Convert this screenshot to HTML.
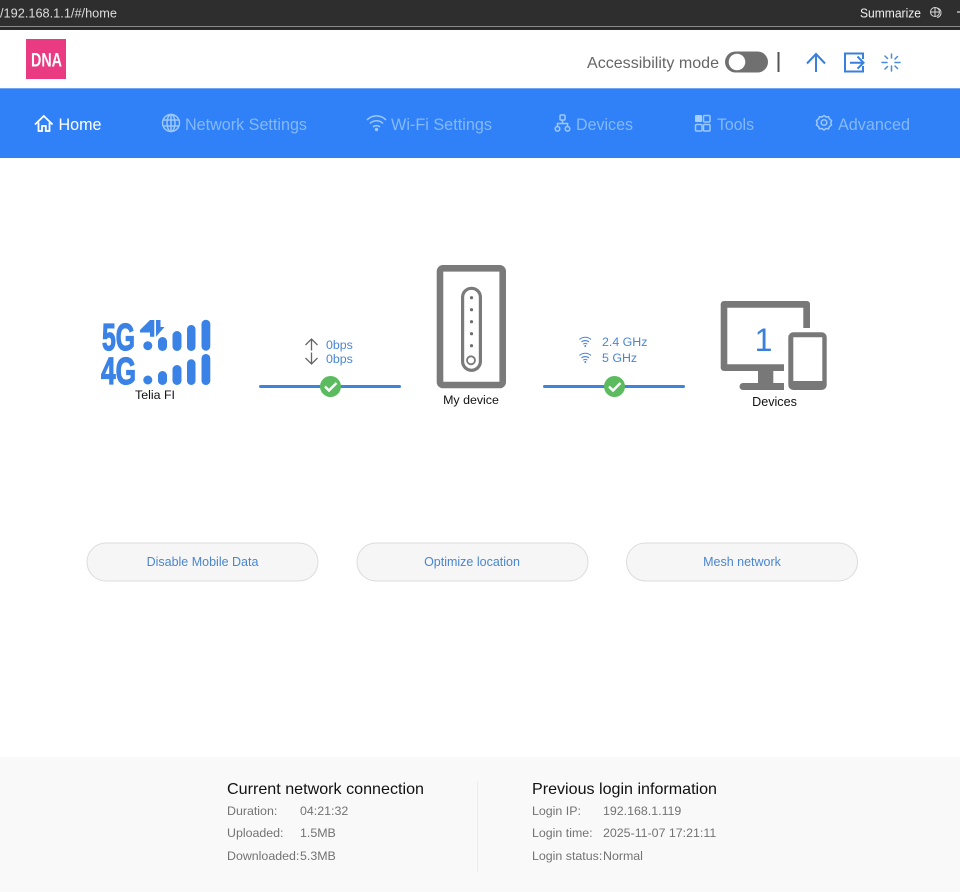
<!DOCTYPE html>
<html lang="en"><head><meta charset="utf-8"><title>Home</title>
<style>
html,body{margin:0;padding:0;background:#fff;width:960px;height:894px;overflow:hidden}
svg{display:block;font-family:"Liberation Sans",sans-serif}
</style></head><body>
<svg width="960" height="894" viewBox="0 0 960 894" xmlns="http://www.w3.org/2000/svg">
<rect width="960" height="894" fill="#fff"/>
<!-- browser bar -->
<rect width="960" height="26" fill="#2e2e2e"/>
<rect y="26" width="960" height="1" fill="#8a8a8a"/>
<rect y="27" width="960" height="3" fill="#2b2b2b"/>
<text x="0" y="17.500" font-size="13" fill="#dcdcdc" textLength="117" lengthAdjust="spacingAndGlyphs">/192.168.1.1/#/home</text>
<text x="860" y="17.500" font-size="13" fill="#f2f2f2" textLength="61" lengthAdjust="spacingAndGlyphs">Summarize</text>
<g fill="none" stroke="#d8d8d8" stroke-width="1"><circle cx="935" cy="12" r="4.500"/><path d="M937 8a4.500 4.500 0 0 1 4 5 4.500 4.500 0 0 1-4 4.500M935 8v8M931 12h8"/></g>
<rect x="957" y="11" width="3" height="2" fill="#999"/>
<!-- logo -->
<rect x="26" y="39" width="40" height="40" fill="#ea3a82"/>
<text x="31" y="66.500" font-size="19" font-weight="bold" fill="#fff" textLength="31" lengthAdjust="spacingAndGlyphs">DNA</text>
<!-- header right -->
<text x="587" y="68" font-size="16" fill="#666" textLength="132" lengthAdjust="spacingAndGlyphs">Accessibility mode</text>
<rect x="725" y="51.500" width="43" height="21" rx="10.500" fill="#707070"/>
<circle cx="737" cy="62" r="8.300" fill="#fff"/>
<rect x="777.500" y="52" width="2" height="20" fill="#555"/>
<g fill="none" stroke="#3a7fdc" stroke-width="2">
<path d="M816 72V54.500M807 63.500l9-9.500 9 9.500"/>
<path d="M863 59v-5.500h-18v18h18v-5.500M850 62.700h13M857.500 56.500l6 6.200-6 6"/>
</g>
<g fill="none" stroke="#4a8ade" stroke-width="1.500" stroke-linecap="round">
<path d="M891.500 54v4M891.500 66v5M882 62.500h5M895 62.500h5M885 56l2.500 2.500M895 66l2.500 2.500M885 69l2.500-2.500M895 59l2.500-2.500"/>
</g>
<!-- nav -->
<rect y="88" width="960" height="70" fill="#3080f8"/>
<rect y="88" width="960" height="1" fill="#6fa6f0"/>
<g font-size="16.200" fill="#84b9fb">
<text x="58.500" y="130" fill="#fff" textLength="43" lengthAdjust="spacingAndGlyphs">Home</text>
<text x="185" y="130" textLength="122" lengthAdjust="spacingAndGlyphs">Network Settings</text>
<text x="391" y="130" textLength="101" lengthAdjust="spacingAndGlyphs">Wi-Fi Settings</text>
<text x="576" y="130" textLength="57" lengthAdjust="spacingAndGlyphs">Devices</text>
<text x="717" y="130" textLength="37" lengthAdjust="spacingAndGlyphs">Tools</text>
<text x="838" y="130" textLength="72" lengthAdjust="spacingAndGlyphs">Advanced</text>
</g>
<path d="M35 124.500L43.800 116l8.800 8.500M38.500 122.500V131h3.500v-5h3.800v5h3.700v-8.500" fill="none" stroke="#fff" stroke-width="1.800"/>
<g fill="none" stroke="#9cc8fc" stroke-width="1.500">
<circle cx="171" cy="123" r="8.500"/><ellipse cx="171" cy="123" rx="4" ry="8.500"/><path d="M171 114.500v17M163 120h16M163 126h16"/>
<path d="M367 120a13 13 0 0 1 19 0M370 123.500a9 9 0 0 1 13 0M373 127a5 5 0 0 1 7 0"/>
<rect x="560" y="115" width="5" height="5" rx="1"/><circle cx="557.500" cy="128.800" r="2.300"/><circle cx="567.500" cy="128.800" r="2.300"/><path d="M562.500 120v3.500M557.500 126.500v-3h10v3"/>
<rect x="703.500" y="115.500" width="6.500" height="6.500" rx="1"/><rect x="695.500" y="124.500" width="6.500" height="6.500" rx="1"/><rect x="703.500" y="124.500" width="6.500" height="6.500" rx="1"/>
<circle cx="824" cy="122.500" r="2.800"/><path d="M824 115.500l2 1.500 2.500-.3 1 2.300 2 1.500-.7 2.500.7 2-2 1.500-1 2.300-2.500-.3-2 1.500-2-1.500-2.500.3-1-2.300-2-1.500.7-2-.7-2.500 2-1.500 1-2.300 2.500.3z"/>
</g>
<rect x="695" y="115" width="7" height="7" rx="1" fill="#a8cefc"/>
<circle cx="376.500" cy="129.500" r="1.700" fill="#9cc8fc"/>
<!-- 5G/4G -->
<g font-weight="bold" fill="#3a82e6" stroke="#3a82e6" stroke-width="1.200" font-size="38">
<text x="102" y="350" textLength="33" lengthAdjust="spacingAndGlyphs">5G</text>
<text x="101" y="384" textLength="35" lengthAdjust="spacingAndGlyphs">4G</text>
</g>
<g fill="#3a82e6">
<circle cx="147.800" cy="345.700" r="4.500"/><rect x="158" y="337" width="9" height="14" rx="4.500"/><rect x="172.500" y="331" width="9" height="20" rx="4.500"/><rect x="187" y="325" width="8.500" height="26" rx="4.250"/><rect x="201.500" y="319.700" width="8.800" height="31" rx="4.400"/>
<circle cx="147.800" cy="380" r="4.500"/><rect x="158" y="371" width="9" height="14" rx="4.500"/><rect x="172.500" y="365" width="9" height="20" rx="4.500"/><rect x="187" y="359.300" width="8.500" height="25.700" rx="4.250"/><rect x="201.500" y="354" width="8.800" height="31" rx="4.400"/>
<path d="M140 330v2.500h10v4.200h4.300V320h-4.300z"/><path d="M156 320h4.500v7h4l-8.500 9.700z"/>
</g>
<text x="155" y="399" font-size="12.400" fill="#111" text-anchor="middle">Telia FI</text>
<!-- rates -->
<path d="M311.500 350.500V339M305.500 345l6-6 6 6M311.500 352.500V364M305.500 358l6 6 6-6" fill="none" stroke="#666" stroke-width="1.300"/>
<g font-size="12.400" fill="#4a86d8"><text x="326" y="349">0bps</text><text x="326" y="363">0bps</text>
<text x="602" y="346">2.4 GHz</text><text x="602" y="362">5 GHz</text></g>
<rect x="259" y="385" width="142" height="3" rx="1.500" fill="#3e83dc"/>
<rect x="543" y="385" width="142" height="3" rx="1.500" fill="#3e83dc"/>
<circle cx="330.500" cy="386.500" r="10.500" fill="#5cbb5f"/><circle cx="614.500" cy="386.500" r="10.500" fill="#5cbb5f"/>
<path d="M325 386.500l4 4 7.500-7.500M609 386.500l4 4 7.500-7.500" fill="none" stroke="#fff" stroke-width="2.400"/>
<!-- small wifi -->
<g fill="none" stroke="#4a86d8" stroke-width="1.100">
<path d="M579.500 339.500a8.500 8.500 0 0 1 11.500 0M581.500 342a5.500 5.500 0 0 1 7.500 0M583.300 344.200a3 3 0 0 1 4 0"/>
<path d="M579.500 355.500a8.500 8.500 0 0 1 11.500 0M581.500 358a5.500 5.500 0 0 1 7.500 0M583.300 360.200a3 3 0 0 1 4 0"/>
</g>
<circle cx="585.300" cy="346" r="1" fill="#4a86d8"/><circle cx="585.300" cy="362" r="1" fill="#4a86d8"/>
<!-- router -->
<rect x="440" y="268.300" width="62.700" height="116.700" rx="3" fill="#fff" stroke="#7a7a7a" stroke-width="6.600"/>
<rect x="462.600" y="288.300" width="17.800" height="82" rx="8.900" fill="#fff" stroke="#7a7a7a" stroke-width="3.200"/>
<g fill="#6e6e6e"><circle cx="471.500" cy="297.700" r="1.600"/><circle cx="471.500" cy="309.700" r="1.600"/><circle cx="471.500" cy="321.700" r="1.600"/><circle cx="471.500" cy="333.700" r="1.600"/><circle cx="471.500" cy="345.700" r="1.600"/></g>
<circle cx="471" cy="360.300" r="4" fill="#fff" stroke="#7a7a7a" stroke-width="1.800"/>
<text x="471" y="404" font-size="12.400" fill="#111" text-anchor="middle">My device</text>
<!-- devices -->
<path fill-rule="evenodd" d="M724 301h83a3 3 0 0 1 3 3v24h-6.700v-20.300h-76v56.600H784V371h-60a3.300 3.300 0 0 1-3.300-3.300V304.300a3.300 3.300 0 0 1 3.300-3.300z" fill="#787878"/>
<rect x="758" y="371" width="15.300" height="13" fill="#787878"/>
<path d="M743 383h41v7h-41a3.500 3.500 0 0 1 0-7z" fill="#787878"/>
<path fill-rule="evenodd" d="M793.300 332.300h28.400a5 5 0 0 1 5 5V385a5 5 0 0 1-5 5h-28.400a5 5 0 0 1-5-5v-47.700a5 5 0 0 1 5-5zM793.300 337.300V381h29v-43.700z" fill="#787878"/>
<text x="763.500" y="351" font-size="32" fill="#3a7fdc" text-anchor="middle">1</text>
<text x="774.500" y="406" font-size="12.600" fill="#111" text-anchor="middle">Devices</text>
<!-- buttons -->
<g fill="#f6f6f6" stroke="#dcdcdc">
<rect x="87" y="543" width="231" height="38" rx="19"/><rect x="357" y="543" width="231" height="38" rx="19"/><rect x="626.500" y="543" width="231" height="38" rx="19"/>
</g>
<g font-size="12.500" fill="#4a86d0" text-anchor="middle"><text x="202.500" y="566">Disable Mobile Data</text><text x="472" y="566">Optimize location</text><text x="742" y="566">Mesh network</text></g>
<!-- footer -->
<rect y="757" width="960" height="135" fill="#f9f9f9"/>
<rect x="477" y="781" width="1" height="91" fill="#ececec"/>
<g font-size="16" fill="#111"><text x="227" y="794" textLength="197" lengthAdjust="spacingAndGlyphs">Current network connection</text><text x="532" y="794" textLength="185" lengthAdjust="spacingAndGlyphs">Previous login information</text></g>
<g font-size="12.400" fill="#737373">
<text x="227" y="815">Duration:</text><text x="300" y="815">04:21:32</text>
<text x="227" y="837">Uploaded:</text><text x="300" y="837">1.5MB</text>
<text x="227" y="860">Downloaded:</text><text x="300" y="860">5.3MB</text>
<text x="532" y="815">Login IP:</text><text x="603" y="815">192.168.1.119</text>
<text x="532" y="837">Login time:</text><text x="603" y="837">2025-11-07 17:21:11</text>
<text x="532" y="860">Login status:</text><text x="603" y="860">Normal</text>
</g>
</svg>
</body></html>
